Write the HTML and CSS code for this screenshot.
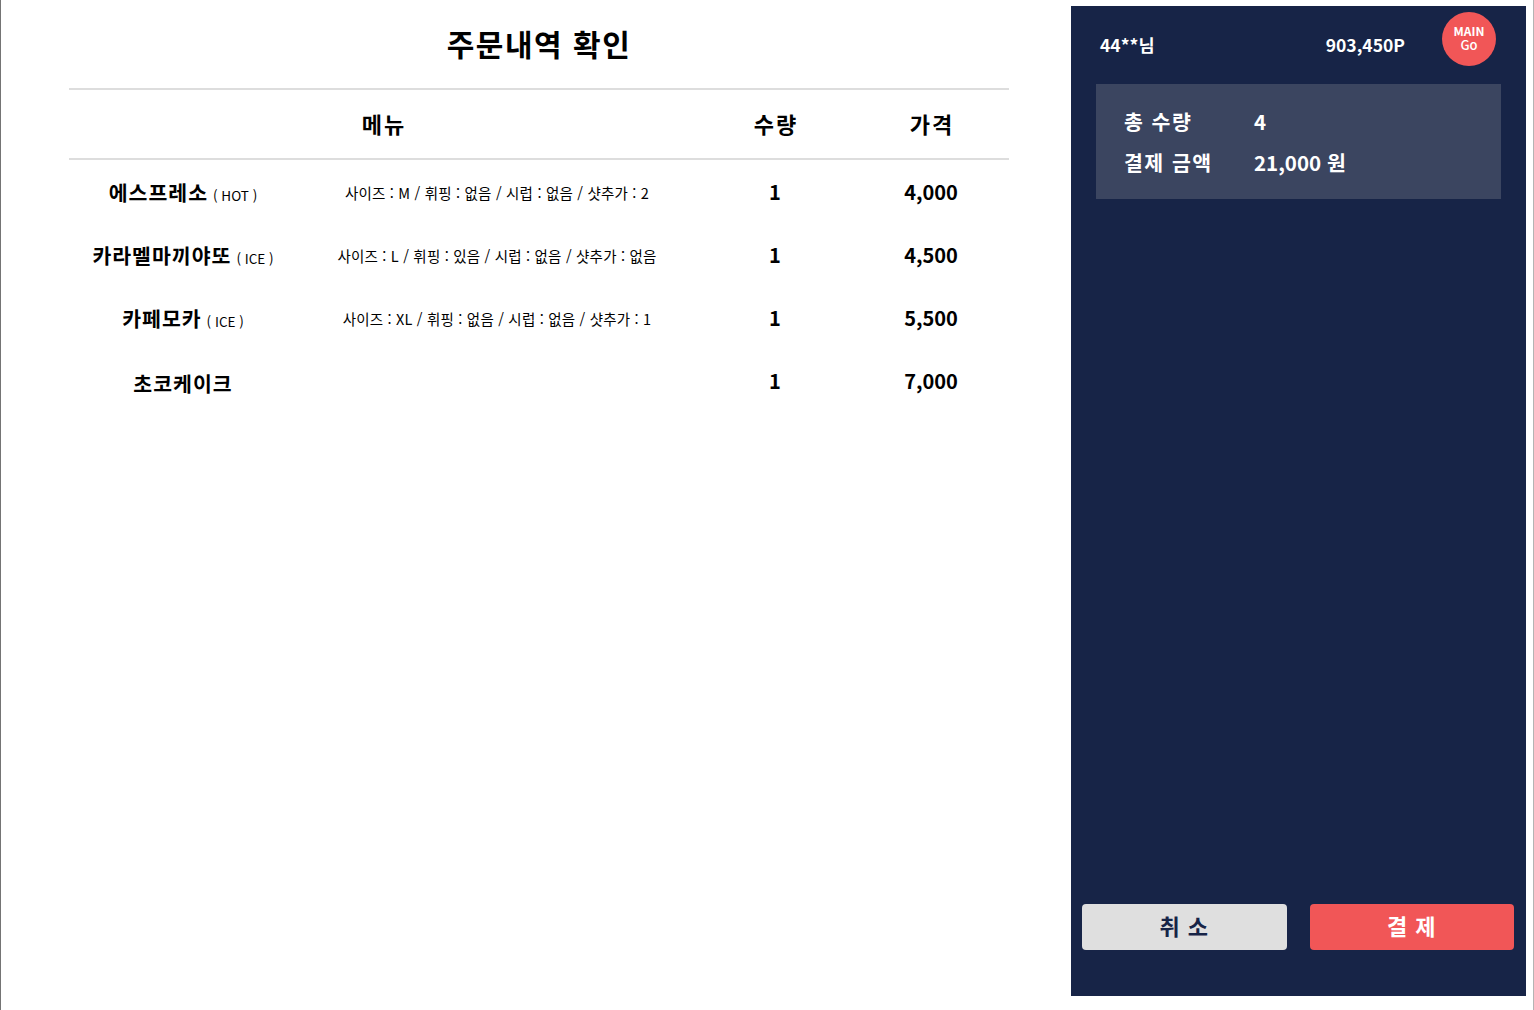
FILE: index.html
```html
<!DOCTYPE html>
<html lang="ko">
<head>
<meta charset="utf-8">
<title>주문내역 확인</title>
<link rel="stylesheet" href="styles.css">
</head>
<body>
<div class="page">
  <main class="left">
    <h1 class="title">주문내역 확인</h1>
    <div class="table">
      <div class="thead">
        <div class="th th-menu">메뉴</div>
        <div class="th">수량</div>
        <div class="th">가격</div>
      </div>
      <div class="row">
        <div class="name">에스프레소<span class="temp">( HOT )</span></div>
        <div class="opts">사이즈 : M / 휘핑 : 없음 / 시럽 : 없음 / 샷추가 : 2</div>
        <div class="num">1</div>
        <div class="num">4,000</div>
      </div>
      <div class="row">
        <div class="name">카라멜마끼야또<span class="temp">( ICE )</span></div>
        <div class="opts">사이즈 : L / 휘핑 : 있음 / 시럽 : 없음 / 샷추가 : 없음</div>
        <div class="num">1</div>
        <div class="num">4,500</div>
      </div>
      <div class="row">
        <div class="name">카페모카<span class="temp">( ICE )</span></div>
        <div class="opts">사이즈 : XL / 휘핑 : 없음 / 시럽 : 없음 / 샷추가 : 1</div>
        <div class="num">1</div>
        <div class="num">5,500</div>
      </div>
      <div class="row">
        <div class="name">초코케이크</div>
        <div class="opts"></div>
        <div class="num">1</div>
        <div class="num">7,000</div>
      </div>
    </div>
  </main>
  <aside class="panel">
    <div class="panel-head">
      <span class="user">44**님</span>
      <span class="points">903,450P</span>
      <a class="main-go"><div class="mg-text">MAIN<br>Go</div></a>
    </div>
    <div class="summary">
      <div class="sum-row"><span class="sum-label">총 수량</span><span class="sum-val">4</span></div>
      <div class="sum-row"><span class="sum-label">결제 금액</span><span class="sum-val">21,000 원</span></div>
    </div>
    <div class="actions">
      <button class="btn btn-cancel">취 소</button>
      <button class="btn btn-pay">결 제</button>
    </div>
  </aside>
</div>
</body>
</html>
```

FILE: styles.css
```css
* { box-sizing: border-box; }
html, body { margin: 0; padding: 0; background: #fff; }
body {
  font-family: "Noto Sans CJK KR", "Noto Sans", sans-serif;
  color: #000;
}
.page {
  display: flex;
  width: 1534px;
  height: 1010px;
  border-left: 1px solid #747474;
  border-right: 1px solid #b4b4b4;
}
.left {
  width: 1070px;
  flex: 0 0 1070px;
  padding-left: 68px;
}
.title {
  margin: 0;
  width: 940px;
  height: 88px;
  line-height: 86px;
  text-align: center;
  font-size: 30px;
  font-weight: 700;
  letter-spacing: 1.5px;
}
.table { width: 940px; }
.thead {
  display: grid;
  grid-template-columns: 628px 156px 156px;
  height: 72px;
  border-top: 2px solid #dddddd;
  border-bottom: 2px solid #dddddd;
  align-items: center;
}
.th {
  text-align: center;
  font-size: 22px;
  font-weight: 700;
  line-height: 30px;
  letter-spacing: 2px;
  text-indent: 2px;
  padding-bottom: 2px;
}
.row {
  display: grid;
  grid-template-columns: 228px 400px 156px 156px;
  height: 63px;
  align-items: center;
}
.thead + .row { margin-top: 2px; }
.name {
  text-align: center;
  font-size: 20.5px;
  font-weight: 700;
  line-height: 28px;
  letter-spacing: 1px;
  white-space: nowrap;
}
.temp {
  font-size: 13.5px;
  font-weight: 400;
  letter-spacing: 0;
  margin-left: 5px;
}
.opts {
  text-align: center;
  font-size: 14.5px;
  line-height: 20px;
  white-space: nowrap;
  letter-spacing: 0.2px;
  padding-bottom: 2px;
}
.num {
  text-align: center;
  font-size: 20px;
  font-weight: 700;
  line-height: 28px;
  padding-bottom: 3px;
}

.panel {
  width: 455px;
  flex: 0 0 455px;
  margin: 6px 0 14px 0;
  background: #172447;
  color: #fff;
  display: flex;
  flex-direction: column;
}
.panel-head {
  display: flex;
  align-items: flex-start;
  height: 78px;
  padding: 6px 30px 0 29px;
}
.user {
  font-size: 17.5px;
  font-weight: 700;
  line-height: 24px;
  margin-top: 21px;
}
.points {
  margin-left: auto;
  font-size: 17.5px;
  font-weight: 700;
  line-height: 24px;
  margin-top: 21px;
}
.main-go {
  width: 54px;
  height: 54px;
  margin-left: 37px;
  border-radius: 50%;
  background: #f15657;
  color: #fff;
  display: flex;
  align-items: center;
  justify-content: center;
  padding-bottom: 2px;
}
.mg-text {
  display: block;
  text-align: center;
  font-size: 13px;
  font-weight: 500;
  line-height: 14px;
}
.mg-text::first-line {
  font-size: 12px;
  font-weight: 700;
}
.summary {
  margin: 0 25px;
  height: 115px;
  background: #3b4560;
  padding: 16px 0 0 28px;
}
.sum-row {
  display: flex;
  height: 41px;
  align-items: center;
}
.sum-label {
  width: 130px;
  font-size: 20.5px;
  font-weight: 700;
  letter-spacing: 1.5px;
}
.sum-val {
  font-size: 20.5px;
  font-weight: 700;
}
.actions {
  margin-top: auto;
  display: flex;
  gap: 23px;
  padding: 0 12px 46px 11px;
}
.btn {
  flex: 1 1 0;
  height: 46px;
  border: none;
  border-radius: 4px;
  font-family: inherit;
  font-size: 22px;
  font-weight: 700;
  letter-spacing: 1px;
  padding: 0 0 4px;
}
.btn-cancel { background: #dfdfdf; color: #172447; }
.btn-pay { background: #f15657; color: #fff; }
```
